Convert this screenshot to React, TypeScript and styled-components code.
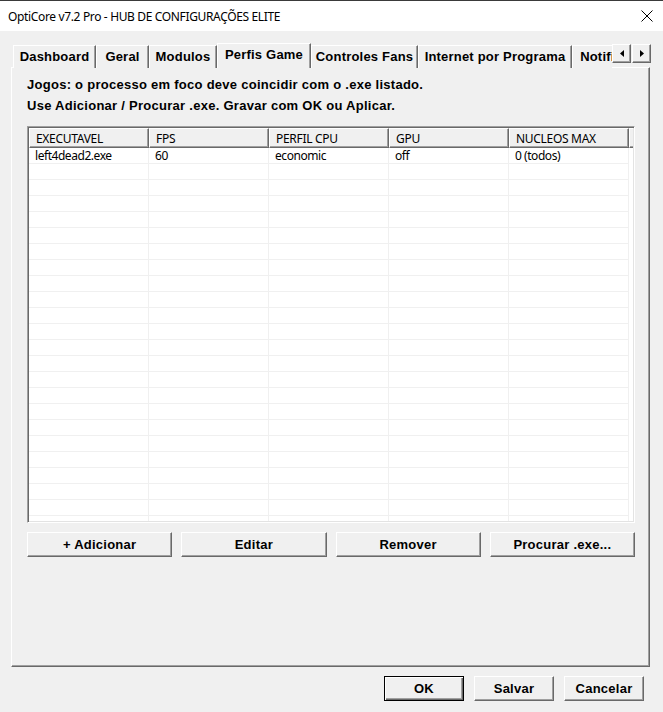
import React from 'react';
import styled, { createGlobalStyle } from 'styled-components';

interface GameProfile {
  exe: string;
  fps: string;
  cpu: string;
  gpu: string;
  cores: string;
}

const tabs = [
  { label: 'Dashboard', width: 83 },
  { label: 'Geral', width: 53 },
  { label: 'Modulos', width: 68 },
  { label: 'Perfis Game', width: 94 },
  { label: 'Controles Fans', width: 107 },
  { label: 'Internet por Programa', width: 154 },
  { label: 'Notificações', width: 96 },
];

const columns = ['EXECUTAVEL', 'FPS', 'PERFIL CPU', 'GPU', 'NUCLEOS MAX'];

const profiles: GameProfile[] = [
  { exe: 'left4dead2.exe', fps: '60', cpu: 'economic', gpu: 'off', cores: '0 (todos)' },
];

const EMPTY_ROWS = 24;

const App: React.FC = () => {
  const activeTab = 'Perfis Game';

  return (
    <>
      <GlobalStyle />
      <Window>
        <TitleBar>
          <Title>OptiCore v7.2 Pro - HUB DE CONFIGURAÇÕES ELITE</Title>
          <CloseIcon width="12" height="12" viewBox="0 0 12 12">
            <path d="M0.5 0.5 L11.5 11.5 M11.5 0.5 L0.5 11.5" stroke="#000" strokeWidth="1" />
          </CloseIcon>
        </TitleBar>

        <Body>
          <TabRow>
            <TabTrack>
              {tabs.map((tab) => (
                <Tab key={tab.label} $width={tab.width} $active={tab.label === activeTab}>
                  {tab.label}
                </Tab>
              ))}
            </TabTrack>
            <ScrollArrows>
              <ArrowButton>
                <svg width="4" height="7" viewBox="0 0 4 7">
                  <path d="M4 0 L0 3.5 L4 7 Z" fill="#000" />
                </svg>
              </ArrowButton>
              <ArrowButton>
                <svg width="4" height="7" viewBox="0 0 4 7">
                  <path d="M0 0 L4 3.5 L0 7 Z" fill="#000" />
                </svg>
              </ArrowButton>
            </ScrollArrows>
          </TabRow>

          <Panel>
            <Hint>Jogos: o processo em foco deve coincidir com o .exe listado.</Hint>
            <Hint>Use Adicionar / Procurar .exe. Gravar com OK ou Aplicar.</Hint>

            <ListView>
              <HeaderRow>
                {columns.map((col) => (
                  <HeaderCell key={col}>{col}</HeaderCell>
                ))}
                <HeaderFiller />
              </HeaderRow>
              <Rows>
                {profiles.map((p) => (
                  <Row key={p.exe}>
                    <Cell>{p.exe}</Cell>
                    <Cell>{p.fps}</Cell>
                    <Cell>{p.cpu}</Cell>
                    <Cell>{p.gpu}</Cell>
                    <Cell>{p.cores}</Cell>
                  </Row>
                ))}
                {Array.from({ length: EMPTY_ROWS }).map((_, i) => (
                  <Row key={`empty-${i}`}>
                    {columns.map((col) => (
                      <Cell key={col} />
                    ))}
                  </Row>
                ))}
              </Rows>
            </ListView>

            <ActionBar>
              <ActionButton>+ Adicionar</ActionButton>
              <ActionButton>Editar</ActionButton>
              <ActionButton>Remover</ActionButton>
              <ActionButton>Procurar .exe...</ActionButton>
            </ActionBar>
          </Panel>

          <Footer>
            <DialogButton $primary>OK</DialogButton>
            <DialogButton>Salvar</DialogButton>
            <DialogButton>Cancelar</DialogButton>
          </Footer>
        </Body>
      </Window>
    </>
  );
};

const GlobalStyle = createGlobalStyle`
  html, body {
    margin: 0;
    padding: 0;
    background: #f0f0f0;
  }
  * {
    box-sizing: border-box;
  }
`;

const Window = styled.div`
  width: 663px;
  height: 712px;
  display: flex;
  flex-direction: column;
  background: #f0f0f0;
  overflow: hidden;
`;

const TitleBar = styled.div`
  height: 31px;
  flex-shrink: 0;
  display: flex;
  align-items: center;
  justify-content: space-between;
  padding: 0 10px 0 8px;
  background: #fff;
  border-top: 1px solid #3a3a3a;
`;

const Title = styled.span`
  font-family: 'Noto Sans', sans-serif;
  font-size: 12px;
  letter-spacing: -0.35px;
  color: #000;
`;

const CloseIcon = styled.svg`
  display: block;
`;

const Body = styled.div`
  flex: 1;
  display: flex;
  flex-direction: column;
  padding: 12px 13px 11px 11px;
`;

/* the active tab is 1px taller than the row so it covers the panel's top edge */
const TabRow = styled.div`
  height: 24px;
  flex-shrink: 0;
  display: flex;
  padding-left: 2px;
  position: relative;
  z-index: 1;
`;

const TabTrack = styled.div`
  flex: 1;
  display: flex;
  align-items: flex-end;
  overflow: hidden;
  height: 25px;
`;

const Tab = styled.div<{ $width: number; $active?: boolean }>`
  flex-shrink: 0;
  width: ${(p) => p.$width}px;
  height: ${(p) => (p.$active ? 25 : 23)}px;
  padding-bottom: ${(p) => (p.$active ? 3 : 1)}px;
  display: flex;
  align-items: center;
  justify-content: center;
  white-space: nowrap;
  font-family: 'Liberation Sans', Arial, sans-serif;
  font-weight: bold;
  font-size: 13px;
  letter-spacing: 0.2px;
  color: #000;
  background: #f0f0f0;
  border-top: 1px solid #fff;
  border-left: 1px solid #fff;
  border-right: 1px solid #696969;
  box-shadow: inset -1px 0 #a0a0a0;
`;

const ScrollArrows = styled.div`
  display: flex;
  gap: 1px;
  margin-top: 1px;
  margin-right: -1px;
`;

const ArrowButton = styled.div`
  width: 19px;
  height: 19px;
  display: flex;
  align-items: center;
  justify-content: center;
  background: #f0f0f0;
  border: 1px solid;
  border-color: #fff #696969 #696969 #fff;
  box-shadow: inset -1px -1px #a0a0a0;
`;

const Panel = styled.div`
  height: 600px;
  flex-shrink: 0;
  display: flex;
  flex-direction: column;
  padding: 6px 14px 0 15px;
  border: 1px solid;
  border-color: #fff #696969 #696969 #fff;
  box-shadow: inset -1px -1px #a0a0a0;
`;

const Hint = styled.div`
  font-family: 'Liberation Sans', Arial, sans-serif;
  font-weight: bold;
  font-size: 13px;
  line-height: 21px;
  letter-spacing: 0.27px;
  color: #000;
`;

const ListView = styled.div`
  margin-top: 10px;
  height: 397px;
  display: flex;
  flex-direction: column;
  background: #fff;
  border: 1px solid;
  border-color: #a0a0a0 #fff #fff #a0a0a0;
  box-shadow: inset 1px 1px #696969, inset -1px -1px #e3e3e3;
  padding: 1px;
  overflow: hidden;
`;

const HeaderRow = styled.div`
  display: flex;
  height: 20px;
  flex-shrink: 0;
`;

const HeaderCell = styled.div`
  width: 120px;
  flex-shrink: 0;
  display: flex;
  align-items: center;
  padding-left: 6px;
  font-family: 'Noto Sans', sans-serif;
  font-size: 12px;
  letter-spacing: -0.3px;
  color: #000;
  background: #f0f0f0;
  border-top: 1px solid #fff;
  border-left: 1px solid #fff;
  border-right: 1px solid #696969;
  border-bottom: 1px solid #696969;
  box-shadow: inset -1px -1px #a0a0a0;
`;

const HeaderFiller = styled.div`
  flex: 1;
  background: #f0f0f0;
  border-top: 1px solid #fff;
  border-left: 1px solid #fff;
  border-bottom: 1px solid #696969;
  box-shadow: inset 0 -1px #a0a0a0;
`;

const Rows = styled.div`
  flex: 1;
  overflow: hidden;
`;

const Row = styled.div`
  display: flex;
  height: 16px;
`;

const Cell = styled.div`
  width: 120px;
  flex-shrink: 0;
  padding-left: 6px;
  font-family: 'Noto Sans', sans-serif;
  font-size: 12px;
  letter-spacing: -0.45px;
  line-height: 16px;
  color: #000;
  white-space: nowrap;
  border-right: 1px solid #f0f0f0;
  border-bottom: 1px solid #f0f0f0;
`;

const ActionBar = styled.div`
  margin-top: 9px;
  display: grid;
  grid-template-columns: repeat(4, 1fr);
  gap: 9px;
`;

const ActionButton = styled.button`
  height: 25px;
  padding: 0;
  font-family: 'Liberation Sans', Arial, sans-serif;
  font-weight: bold;
  font-size: 13px;
  letter-spacing: 0.25px;
  color: #000;
  background: #f0f0f0;
  border: 1px solid;
  border-color: #fff #696969 #696969 #fff;
  box-shadow: inset -1px -1px #a0a0a0;
  border-radius: 0;
`;

const Footer = styled.div`
  margin-top: 9px;
  display: flex;
  justify-content: flex-end;
  gap: 10px;
  padding-right: 6px;
`;

const DialogButton = styled.button<{ $primary?: boolean }>`
  width: 80px;
  height: 25px;
  padding: 0;
  font-family: 'Liberation Sans', Arial, sans-serif;
  font-weight: bold;
  font-size: 13px;
  letter-spacing: 0.25px;
  color: #000;
  background: #f0f0f0;
  border-radius: 0;
  border: 1px solid;
  border-color: ${(p) => (p.$primary ? '#000' : '#fff #696969 #696969 #fff')};
  box-shadow: ${(p) =>
    p.$primary
      ? 'inset 1px 1px #fff, inset -1px -1px #696969, inset -2px -2px #a0a0a0'
      : 'inset -1px -1px #a0a0a0'};
`;

export default App;
